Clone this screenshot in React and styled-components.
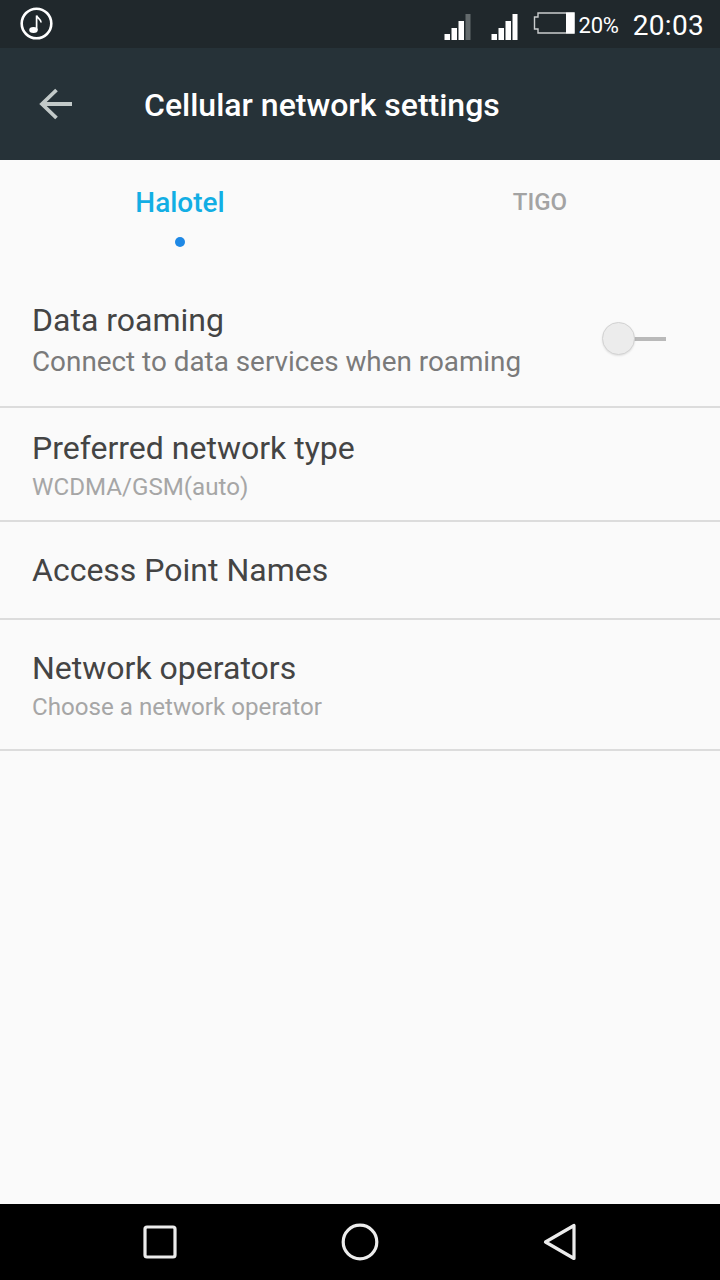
import React from "react";
import styled, { createGlobalStyle } from "styled-components";

const Global = createGlobalStyle`
  html, body { margin: 0; padding: 0; background: #fafafa; }
  * { box-sizing: border-box; }
`;
const Screen = styled.div`
  width: 720px; height: 1280px; display: flex; flex-direction: column;
  background: #fafafa; font-family: Roboto, "Noto Sans", sans-serif; overflow: hidden;
`;
const StatusBar = styled.div`
  height: 48px; flex: none; background: #20282c; display: flex; align-items: center;
  padding: 0 16px 0 20px; color: #fff;
`;
const StatusRight = styled.div`
  margin-left: auto; display: flex; align-items: center;
`;
const Percent = styled.span`
  font-size: 22px; margin-left: 4px; margin-right: 14px; letter-spacing: -0.2px; position: relative; top: 1px;
`;
const Clock = styled.span`
  font-size: 28px; letter-spacing: 0.3px; position: relative; top: 1px;
`;
const SignalIcon = styled.svg`
  display: block; margin-right: ${p => p.$gap}px; position: relative; top: 3px;
`;
const BatteryIcon = styled.svg`
  display: block; position: relative; top: -1px;
`;
const MusicIcon = styled.svg`
  display: block; margin-top: -2px;
`;
const AppBar = styled.div`
  height: 112px; flex: none; background: #263238; display: flex; align-items: center; padding-left: 38px;
`;
const BarTitle = styled.div`
  color: #fff; font-size: 32px; font-weight: 500; margin-left: 70px; padding-top: 2px;
`;
const Tabs = styled.div`
  display: grid; grid-template-columns: 1fr 1fr; height: 99px; flex: none;
`;
const Tab = styled.div`
  display: flex; flex-direction: column; align-items: center; padding-top: 26px;
  color: ${p => (p.$active ? "#12aee4" : "#a3a3a3")};
  font-size: ${p => (p.$active ? 28 : 24)}px; font-weight: 500; line-height: 33px;
`;
const Dot = styled.div`
  width: 10px; height: 10px; border-radius: 50%; background: #1e88e5; margin-top: 18px;
`;
const Row = styled.div`
  height: ${p => p.$h}px; flex: none; border-bottom: 2px solid #dcdcdc; padding: ${p => p.$pt}px 32px 0;
  display: flex; justify-content: space-between;
`;
const RowTitle = styled.div`
  font-size: 32px; line-height: 40px; color: #444;
`;
const RowSub = styled.div`
  font-size: ${p => (p.$dark ? 27.85 : 24.15)}px; line-height: ${p => (p.$dark ? 36 : 34)}px;
  color: ${p => (p.$dark ? "#7a7a7a" : "#a6a6a6")};
  margin-top: ${p => (p.$dark ? 4 : 2)}px;
`;
const Switch = styled.div`
  width: 64px; height: 36px; position: relative; margin: 21px 22px 0 0; flex: none;
`;
const Track = styled.div`
  position: absolute; left: 30px; right: 0; top: 16px; height: 4px; background: #b9b9b9;
`;
const Thumb = styled.div`
  position: absolute; left: 0; top: 1px; width: 33px; height: 33px; border-radius: 50%;
  background: #ececec; border: 1.5px solid #d2d2d2; box-shadow: 0 1px 2px rgba(0,0,0,.1);
`;
const Spacer = styled.div`flex: 1;`;
const NavBar = styled.div`
  height: 76px; flex: none; background: #000; display: grid; grid-template-columns: repeat(3, 200px);
  justify-content: center; justify-items: center; align-items: center;
`;
const NavIcon = styled.svg`
  display: block;
`;
const BackIcon = styled.svg`
  display: block; flex: none;
`;

const Signal = ({ dim, gap }) => (
  <SignalIcon $gap={gap} width="27" height="27" viewBox="0 0 27 27">
    <rect x="0.5" y="20" width="5.5" height="6" fill="#fff" />
    <rect x="7.5" y="14" width="5.5" height="12" fill="#fff" />
    <rect x="14.5" y="7" width="5.5" height="19" fill="#fff" />
    <rect x="21.5" y="0" width="5" height="26" fill={dim ? "#636a6c" : "#fff"} />
  </SignalIcon>
);

export default function App() {
  return (
    <Screen>
      <Global />
      <StatusBar>
        <MusicIcon width="33" height="33" viewBox="0 0 33 33">
          <circle cx="16.5" cy="16.5" r="14.8" fill="none" stroke="#fff" strokeWidth="2.6" />
          <ellipse cx="13.5" cy="23" rx="4.3" ry="2.9" fill="#fff" />
          <path d="M16.6 23V8.5c1 3.2 4.5 3.5 4.5 7" fill="none" stroke="#fff" strokeWidth="1.7" />
        </MusicIcon>
        <StatusRight>
          <Signal dim gap={20} />
          <Signal gap={15} />
          <BatteryIcon width="42" height="22" viewBox="0 0 42 22">
            <path d="M5 1h36v20H5v-4H1.5V5H5z" fill="none" stroke="#c9cccd" strokeWidth="1.4" />
            <rect x="33" y="0.5" width="8.5" height="21" fill="#fff" />
          </BatteryIcon>
          <Percent>20%</Percent>
          <Clock>20:03</Clock>
        </StatusRight>
      </StatusBar>
      <AppBar>
        <BackIcon width="36" height="36" viewBox="0 0 36 36">
          <path d="M34 18H4M18.5 4 4 18l14.5 14" fill="none" stroke="#c3cac9" strokeWidth="3.8" />
        </BackIcon>
        <BarTitle>Cellular network settings</BarTitle>
      </AppBar>
      <Tabs>
        <Tab $active>Halotel<Dot /></Tab>
        <Tab>TIGO</Tab>
      </Tabs>
      <Row $h={149} $pt={41}>
        <div>
          <RowTitle>Data roaming</RowTitle>
          <RowSub $dark>Connect to data services when roaming</RowSub>
        </div>
        <Switch><Track /><Thumb /></Switch>
      </Row>
      <Row $h={114} $pt={20}>
        <div>
          <RowTitle>Preferred network type</RowTitle>
          <RowSub>WCDMA/GSM(auto)</RowSub>
        </div>
      </Row>
      <Row $h={98} $pt={28}>
        <RowTitle>Access Point Names</RowTitle>
      </Row>
      <Row $h={131} $pt={28}>
        <div>
          <RowTitle>Network operators</RowTitle>
          <RowSub>Choose a network operator</RowSub>
        </div>
      </Row>
      <Spacer />
      <NavBar>
        <NavIcon width="34" height="34" viewBox="0 0 34 34">
          <rect x="2" y="2" width="30" height="30" rx="2" fill="none" stroke="#ececec" strokeWidth="3.2" />
        </NavIcon>
        <NavIcon width="38" height="38" viewBox="0 0 38 38">
          <circle cx="19" cy="19" r="16.8" fill="none" stroke="#ececec" strokeWidth="3.2" />
        </NavIcon>
        <NavIcon width="34" height="38" viewBox="0 0 34 38">
          <path d="M31 2.5v33L2.5 19z" fill="none" stroke="#ececec" strokeWidth="3.2" strokeLinejoin="round" />
        </NavIcon>
      </NavBar>
    </Screen>
  );
}
